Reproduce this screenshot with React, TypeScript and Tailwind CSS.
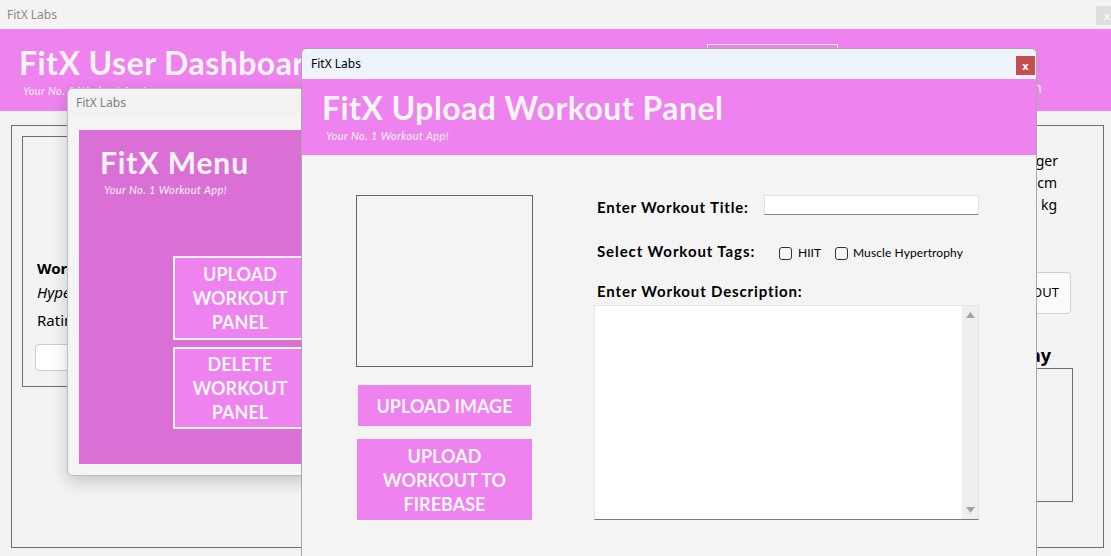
import React from "react";

const HF = "font-['Lato',sans-serif]";
const UF = "font-['Noto_Sans',sans-serif]";

function Checkbox() {
  return <div className="w-[13px] h-[13px] rounded-[3px] border border-[#333333] bg-[#f7f7f7]" />;
}

export default function App() {
  return (
    <div className={`relative w-[1111px] h-[556px] overflow-hidden bg-[#f3f3f3] ${UF}`}>
      {/* Dashboard window (base) */}
      <div className="flex flex-col w-full h-full">
        <div className="h-[29px] flex items-start justify-between pl-[7px] shrink-0">
          <span className="text-[12px] leading-[29px] text-[#8a8a8a]">FitX Labs</span>
          <div className="mt-[6px] w-[15px] h-[19px] bg-[#dedede] flex items-center justify-end pr-[1px] text-[11px] leading-none text-[#f8f8f8] font-bold">x</div>
        </div>
        <div className="h-[82px] shrink-0 bg-[#ee82ee] flex">
          <div className={`w-[707px] pl-[19px] pt-[18px] ${HF} text-[#f4f4f4]`}>
            <div className="text-[32px] leading-[32px] font-bold tracking-[0.45px]">FitX User Dashboard</div>
            <div className="pl-[4px] mt-[5px] text-[11px] leading-[13px] italic tracking-[0.4px]">Your No. 1 Workout App!</div>
          </div>
          <div className="mt-[15px] w-[131px] h-[34px] border border-[#f4f4f4]" />
          <div className="w-[204px] pt-[49px] text-right text-[14px] leading-[20px] text-[#f4f4f4]">Gold Member Plan</div>
        </div>
        <div className="flex-1 mt-[14px] ml-[11px] mr-[7px] mb-[8px] border border-[#6e6e6e] p-[10px] flex justify-between">
          <div className="w-[480px] h-[251px] border border-[#6e6e6e] flex flex-col justify-end pl-[12px] pb-[15px]">
            <div className="pl-[2px] text-[15px] leading-[22px] font-bold text-black">Workout Title: Push Day</div>
            <div className="pl-[2px] mt-[2px] text-[15px] leading-[22px] italic text-black">Hypertrophy</div>
            <div className="pl-[2px] mt-[6px] text-[15px] leading-[22px] text-black">Rating: 4.5 / 5</div>
            <div className="mt-[13px] w-[200px] h-[27px] rounded-[4px] border border-[#cccccc] bg-white" />
          </div>
          <div className="w-[230px] mr-[20px] pt-[14px] flex flex-col items-end text-black">
            <div className="pr-[15px] text-[14px] leading-[22px]">Name: Arnold Schwarzenegger</div>
            <div className="pr-[16px] text-[14px] leading-[22px]">Height: 188 cm</div>
            <div className="pr-[16px] text-[14px] leading-[22px]">Weight: 113 kg</div>
            <div className="mt-[56px] mr-[2px] w-[130px] h-[42px] rounded-[4px] border border-[#d0d0d0] bg-[#fbfbfb] flex items-center justify-end pr-[11px] text-[13px]">LOG OUT</div>
            <div className="mt-[29px] pr-[22px] text-[18px] leading-[24px] font-bold">Workout of the Day</div>
            <div className="mt-[1px] w-[200px] h-[134px] border border-[#6e6e6e]" />
          </div>
        </div>
      </div>

      {/* Menu window */}
      <div className="absolute left-[67px] top-[88px] w-[300px] h-[388px] rounded-[6px] border border-[#bdbdbd] bg-[#f5f5f5] shadow-[0_6px_16px_rgba(0,0,0,0.18)] flex flex-col overflow-hidden">
        <div className="h-[28px] shrink-0 bg-[#f2f2f2] pl-[8px] text-[12px] leading-[28px] text-[#808080]">FitX Labs</div>
        <div className="flex-1 pt-[13px] px-[11px] pb-[11px]">
          <div className={`h-full bg-[#da70d6] ${HF} text-[#f4f4f4] flex flex-col`}>
            <div className="pl-[21px] pt-[17px] text-[30px] leading-[30px] font-bold tracking-[0.9px]">FitX Menu</div>
            <div className="pl-[25px] mt-[6px] text-[11px] leading-[13px] italic tracking-[0.4px]">Your No. 1 Workout App!</div>
            <div className="ml-[94px] mt-[60px] w-[134px] h-[84px] border-2 border-[#f4f4f4] bg-[#ee82ee] flex items-center justify-center text-center text-[18px] leading-[24px] font-bold">
              UPLOAD<br />WORKOUT<br />PANEL
            </div>
            <div className="ml-[94px] mt-[7px] w-[134px] h-[82px] border-2 border-[#f4f4f4] bg-[#ee82ee] flex items-center justify-center text-center text-[18px] leading-[24px] font-bold">
              DELETE<br />WORKOUT<br />PANEL
            </div>
          </div>
        </div>
      </div>

      {/* Upload window */}
      <div className="absolute left-[301px] top-[48px] w-[736px] h-[530px] rounded-t-[6px] border border-[#a8a8a8] bg-[#f4f4f4] flex flex-col overflow-hidden">
        <div className="h-[30px] shrink-0 bg-[#eef2f9] flex items-start justify-between">
          <span className="pl-[9px] text-[12px] leading-[30px] text-black">FitX Labs</span>
          <div className="mt-[7px] mr-[1px] w-[19px] h-[19px] bg-[#c44f4f] flex items-center justify-center text-[11px] leading-none font-bold text-white">x</div>
        </div>
        <div className={`h-[76px] shrink-0 bg-[#ee82ee] ${HF} text-[#f4f4f4] pl-[20px] pt-[13px]`}>
          <div className="text-[32px] leading-[32px] font-bold tracking-[0.45px]">FitX Upload Workout Panel</div>
          <div className="pl-[4px] mt-[5px] text-[11px] leading-[13px] italic tracking-[0.4px]">Your No. 1 Workout App!</div>
        </div>
        <div className="flex-1 flex pl-[54px] pt-[40px]">
          <div className={`w-[177px] flex flex-col items-center ${HF} text-[#f4f4f4]`}>
            <div className="w-[177px] h-[172px] border border-[#666666]" />
            <div className="mt-[18px] w-[173px] h-[41px] bg-[#ee82ee] flex items-center justify-center text-[18px] leading-[24px] font-bold">UPLOAD IMAGE</div>
            <div className="mt-[13px] w-[175px] h-[81px] bg-[#ee82ee] flex items-center justify-center text-center text-[18px] leading-[24px] font-bold">
              UPLOAD<br />WORKOUT TO<br />FIREBASE
            </div>
          </div>
          <div className={`ml-[61px] w-[385px] flex flex-col ${HF} text-black`}>
            <div className="flex items-center h-[20px]">
              <div className="w-[170px] pl-[3px] pt-[4px] text-[15px] leading-[20px] font-bold tracking-[0.8px]">Enter Workout Title:</div>
              <div className="w-[215px] h-[20px] bg-white border border-[#e2e2e2] border-b-[#8a8a8a]" />
            </div>
            <div className="mt-[26px] flex items-center h-[20px]">
              <div className="w-[185px] pl-[3px] text-[15px] leading-[20px] font-bold tracking-[0.9px]">Select Workout Tags:</div>
              <div className="mt-[4px] flex items-center text-[12px] leading-[16px]">
                <Checkbox />
                <span className="ml-[6px]">HIIT</span>
                <div className="ml-[14px]"><Checkbox /></div>
                <span className="ml-[5px] tracking-[0.1px]">Muscle Hypertrophy</span>
              </div>
            </div>
            <div className="mt-[20px] pl-[3px] text-[15px] leading-[20px] font-bold tracking-[0.85px]">Enter Workout Description:</div>
            <div className="mt-[4px] w-[385px] h-[215px] bg-white border border-[#e6e6e6] border-b-[#7a7a7a] flex justify-end">
              <div className="w-[16px] h-full bg-[#efefef] flex flex-col items-center justify-between py-[6px]">
                <svg width="9" height="6" viewBox="0 0 9 6"><path d="M4.5 0 L9 6 L0 6 Z" fill="#a3a3a3" /></svg>
                <svg width="9" height="6" viewBox="0 0 9 6"><path d="M0 0 L9 0 L4.5 6 Z" fill="#a3a3a3" /></svg>
              </div>
            </div>
          </div>
        </div>
      </div>
    </div>
  );
}
